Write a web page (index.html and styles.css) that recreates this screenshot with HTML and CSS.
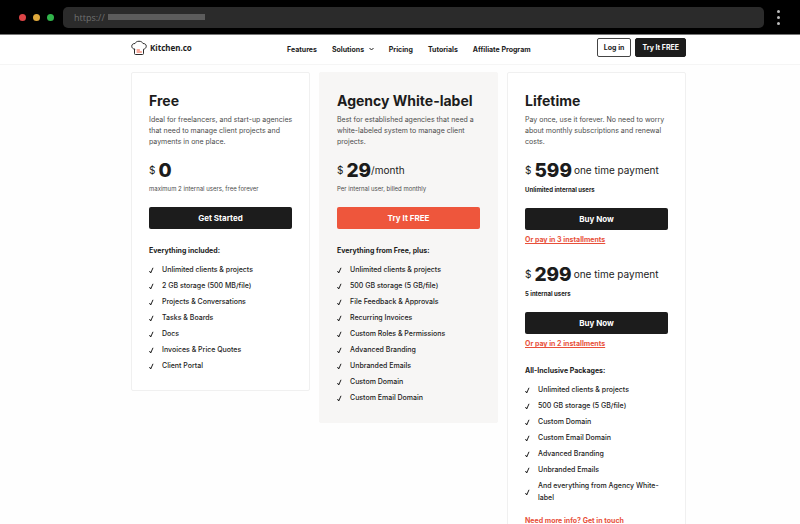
FILE: index.html
```html
<!DOCTYPE html>
<html lang="en">

<head>
    <meta charset="UTF-8">
    <meta name="viewport" content="width=device-width, initial-scale=1.0">
    <title>Kitchen.co - Pricing</title>
    <link rel="stylesheet" href="styles.css">
</head>

<body>
    <div class="browser">
        <div class="lights">
            <span class="light red"></span>
            <span class="light yellow"></span>
            <span class="light green"></span>
        </div>
        <div class="address">https:// <span class="address-line"></span></div>
        <div class="dots"><span></span><span></span><span></span></div>
    </div>

    <header class="header">
        <div class="container header-inner">
            <a class="logo" href="#">
                <svg width="16" height="16" viewBox="0 0 32 32" fill="none" stroke-linecap="round" stroke-linejoin="round">
                    <path stroke="#2b2b2b" stroke-width="2" d="M7 18.500L7 27Q7 29 9 29H23Q25 29 25 27V18.500C28 18 30.500 15.500 30.500 12.500C30.500 9 28 7 24 7C22.500 4 20 2.500 16 2.500S9.500 4 8 7C4 7 1.500 9 1.500 12.500C1.500 15.500 4 18 7 18.500Z" />
                    <path stroke="#ee563c" stroke-width="2" d="M12 20H17M12 24H21" />
                </svg>
                Kitchen.co
            </a>
            <nav class="nav">
                <a href="#">Features</a>
                <a href="#">Solutions
                    <svg class="chevron" width="5" height="4" viewBox="0 0 5 4" fill="none" stroke="#1c1c1c"><path d="M.5 1L2.500 3L4.500 1" /></svg>
                </a>
                <a href="#">Pricing</a>
                <a href="#">Tutorials</a>
                <a href="#">Affiliate Program</a>
            </nav>
            <div class="account">
                <button class="btn-small">Log in</button>
                <button class="btn-small dark">Try It FREE</button>
            </div>
        </div>
    </header>

    <main class="main">
        <div class="container plans">
            <section class="card">
                <h2>Free</h2>
                <p class="desc">Ideal for freelancers, and start-up agencies that need to manage client projects and payments in one place.</p>
                <div class="price"><span>$</span><b>0</b></div>
                <p class="note">maximum 2 internal users, free forever</p>
                <button class="btn">Get Started</button>
                <h3>Everything included:</h3>
                <ul class="features">
                    <li>Unlimited clients &amp; projects</li>
                    <li>2 GB storage (500 MB/file)</li>
                    <li>Projects &amp; Conversations</li>
                    <li>Tasks &amp; Boards</li>
                    <li>Docs</li>
                    <li>Invoices &amp; Price Quotes</li>
                    <li>Client Portal</li>
                </ul>
            </section>

            <section class="card featured">
                <h2>Agency White-label</h2>
                <p class="desc">Best for established agencies that need a white-labeled system to manage client projects.</p>
                <div class="price"><span>$</span><b>29</b><span>/month</span></div>
                <p class="note">Per internal user, billed monthly</p>
                <button class="btn orange">Try It FREE</button>
                <h3>Everything from Free, plus:</h3>
                <ul class="features">
                    <li>Unlimited clients &amp; projects</li>
                    <li>500 GB storage (5 GB/file)</li>
                    <li>File Feedback &amp; Approvals</li>
                    <li>Recurring Invoices</li>
                    <li>Custom Roles &amp; Permissions</li>
                    <li>Advanced Branding</li>
                    <li>Unbranded Emails</li>
                    <li>Custom Domain</li>
                    <li>Custom Email Domain</li>
                </ul>
            </section>

            <section class="card">
                <h2>Lifetime</h2>
                <p class="desc">Pay once, use it forever. No need to worry about monthly subscriptions and renewal costs.</p>
                <div class="price"><span>$</span><b>599</b><span class="once">one time payment</span></div>
                <p class="note strong">Unlimited internal users</p>
                <button class="btn">Buy Now</button>
                <a class="link" href="#">Or pay in 3 installments</a>
                <div class="price second"><span>$</span><b>299</b><span class="once">one time payment</span></div>
                <p class="note strong">5 internal users</p>
                <button class="btn">Buy Now</button>
                <a class="link" href="#">Or pay in 2 installments</a>
                <h3>All-Inclusive Packages:</h3>
                <ul class="features">
                    <li>Unlimited clients &amp; projects</li>
                    <li>500 GB storage (5 GB/file)</li>
                    <li>Custom Domain</li>
                    <li>Custom Email Domain</li>
                    <li>Advanced Branding</li>
                    <li>Unbranded Emails</li>
                    <li>And everything from Agency White-label</li>
                </ul>
                <a class="link contact" href="#">Need more info? Get in touch</a>
            </section>
        </div>
    </main>
</body>

</html>
```
FILE: styles.css
```css
* {
    margin: 0;
    padding: 0;
    box-sizing: border-box;
}

body {
    font-family: Inter, "Liberation Sans", sans-serif;
    font-size: 7px;
    color: #1c1c1c;
    background: #fefefe;
}

a {
    color: inherit;
    text-decoration: none;
}

button {
    font: inherit;
    font-weight: 700;
    cursor: pointer;
}

.browser {
    display: flex;
    align-items: center;
    height: 35px;
    padding: 0 20px 0 19px;
    background: #000;
    border-bottom: 1px solid #777;
}

.lights {
    display: flex;
    gap: 7px;
    margin-right: 9px;
}

.light {
    width: 7px;
    height: 7px;
    border-radius: 50%;
}

.red { background: #dc4446; }
.yellow { background: #dfa83b; }
.green { background: #31b44b; }

.address {
    display: flex;
    flex: 1;
    align-items: center;
    gap: 3px;
    height: 21px;
    padding-left: 11px;
    border-radius: 5px;
    background: #2b2b2b;
    color: #707070;
    font-family: "Open Sans", sans-serif;
    font-size: 9px;
}

.address-line {
    width: 97px;
    height: 6px;
    background: #5c5c5c;
}

.dots {
    display: grid;
    gap: 3px;
    margin-left: 13px;
}

.dots span {
    width: 3px;
    height: 3px;
    border-radius: 50%;
    background: #bbb;
}

/* content sits slightly right of the window centre */
.header,
.main {
    padding-left: 17px;
}

.container {
    max-width: 555px;
    margin: 0 auto;
}

.header {
    background: #fff;
    border-bottom: 1px solid #f5f5f5;
}

.header-inner {
    display: flex;
    align-items: center;
    height: 29px;
    padding-bottom: 4px;
}

.logo {
    display: flex;
    align-items: center;
    gap: 3px;
    width: 156px;
    font-family: "Noto Sans", sans-serif;
    font-size: 8px;
    font-weight: 700;
}

.nav {
    display: flex;
    gap: 15px;
    padding-top: 3px;
    font-weight: 700;
}

.chevron {
    margin-left: 3px;
    vertical-align: 1px;
}

.account {
    display: flex;
    gap: 4px;
    margin-left: auto;
}

.btn-small {
    height: 19px;
    padding: 0 6px;
    border: 1px solid #444;
    border-radius: 2px;
    background: #fff;
    color: #1c1c1c;
}

.btn-small.dark {
    background: #1c1c1c;
    border-color: #1c1c1c;
    color: #fff;
}

.plans {
    display: grid;
    grid-template-columns: repeat(3, 1fr);
    gap: 9px;
    align-items: start;
    margin-top: 7px;
}

.card {
    padding: 18px 17px;
    border: 1px solid #f0f0f0;
    border-radius: 2px;
    background: #fff;
}

.featured {
    background: #f7f6f5;
    border-color: #f7f6f5;
}

h2 {
    font-size: 14px;
    line-height: 20px;
    white-space: nowrap;
}

.desc {
    margin: 3px -6px 0 0;
    line-height: 11px;
    color: #4c4c4c;
}

.price {
    display: flex;
    align-items: center;
    height: 24px;
    margin-top: 11px;
    font-size: 10px;
}

.price.second {
    margin-top: 17px;
}

.price b {
    margin-left: 3px;
    font-size: 19px;
    font-weight: 800;
}

.once {
    margin-left: 2px;
}

.note {
    margin-top: 2px;
    font-size: 6px;
    line-height: 10px;
    color: #4c4c4c;
}

.note.strong {
    margin-top: 3px;
    font-weight: 700;
    color: #1c1c1c;
}

.btn {
    display: block;
    width: 100%;
    height: 22px;
    margin-top: 13px;
    border: none;
    border-radius: 2px;
    background: #1c1c1c;
    color: #fff;
    font-size: 8px;
}

.btn.orange {
    background: #ee563c;
}

.link {
    display: block;
    margin-top: 5px;
    line-height: 10px;
    font-weight: 700;
    color: #e8503a;
    text-decoration: underline;
}

h3 {
    margin-top: 17px;
    font-size: 7px;
    line-height: 10px;
}

.features {
    display: grid;
    gap: 4px;
    margin-top: 8px;
    list-style: none;
    line-height: 12px;
    font-weight: 500;
}

.features li {
    display: flex;
    align-items: center;
}

.features li::before {
    content: "";
    flex: none;
    width: 13px;
    height: 7px;
    background: url("data:image/svg+xml,%3Csvg xmlns='http://www.w3.org/2000/svg' width='5' height='7' viewBox='0 0 5 7' fill='none' stroke='%231c1c1c'%3E%3Cpath d='M.5 4L1.700 6L4 .8'/%3E%3C/svg%3E") no-repeat;
}

.link.contact {
    margin-top: 12px;
}
```
